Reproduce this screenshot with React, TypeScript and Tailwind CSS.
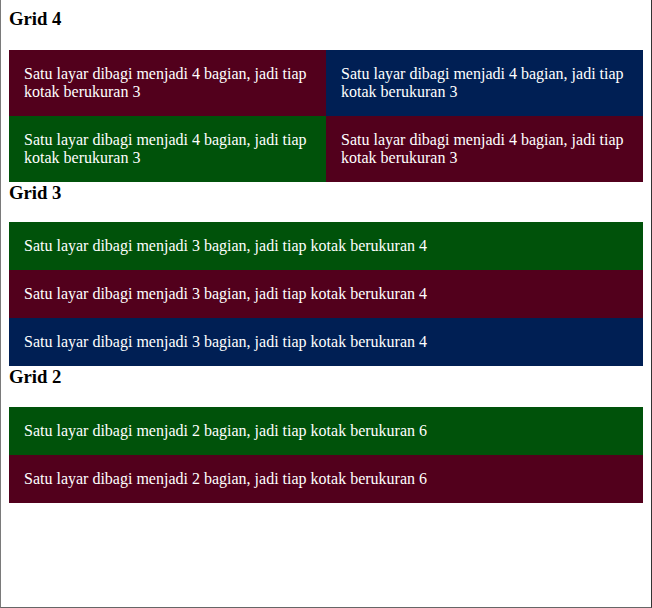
export default function App() {
  const maroon = "bg-[#52001c]";
  const navy = "bg-[#001f54]";
  const green = "bg-[#00520a]";

  return (
    <div className="min-h-screen border-l border-r border-b border-l-[#7a7a7a] border-r-[#333333] border-b-[#666666] bg-white px-2 pt-2 font-['Liberation_Serif',serif] text-black">
      <h3 className="mb-[20.5px] text-[18.72px] font-bold leading-[21.5px]">Grid 4</h3>
      <div className="grid grid-cols-2 text-base leading-[18px] text-white">
        <div className={`${maroon} p-[15px]`}>Satu layar dibagi menjadi 4 bagian, jadi tiap kotak berukuran 3</div>
        <div className={`${navy} p-[15px]`}>Satu layar dibagi menjadi 4 bagian, jadi tiap kotak berukuran 3</div>
        <div className={`${green} p-[15px]`}>Satu layar dibagi menjadi 4 bagian, jadi tiap kotak berukuran 3</div>
        <div className={`${maroon} p-[15px]`}>Satu layar dibagi menjadi 4 bagian, jadi tiap kotak berukuran 3</div>
      </div>

      <h3 className="mb-[18.72px] text-[18.72px] font-bold leading-[21.5px]">Grid 3</h3>
      <div className="flex flex-col text-base leading-[18px] text-white">
        <div className={`${green} p-[15px]`}>Satu layar dibagi menjadi 3 bagian, jadi tiap kotak berukuran 4</div>
        <div className={`${maroon} p-[15px]`}>Satu layar dibagi menjadi 3 bagian, jadi tiap kotak berukuran 4</div>
        <div className={`${navy} p-[15px]`}>Satu layar dibagi menjadi 3 bagian, jadi tiap kotak berukuran 4</div>
      </div>

      <h3 className="mb-[19.5px] text-[18.72px] font-bold leading-[21.5px]">Grid 2</h3>
      <div className="flex flex-col text-base leading-[18px] text-white">
        <div className={`${green} p-[15px]`}>Satu layar dibagi menjadi 2 bagian, jadi tiap kotak berukuran 6</div>
        <div className={`${maroon} p-[15px]`}>Satu layar dibagi menjadi 2 bagian, jadi tiap kotak berukuran 6</div>
      </div>
    </div>
  );
}
